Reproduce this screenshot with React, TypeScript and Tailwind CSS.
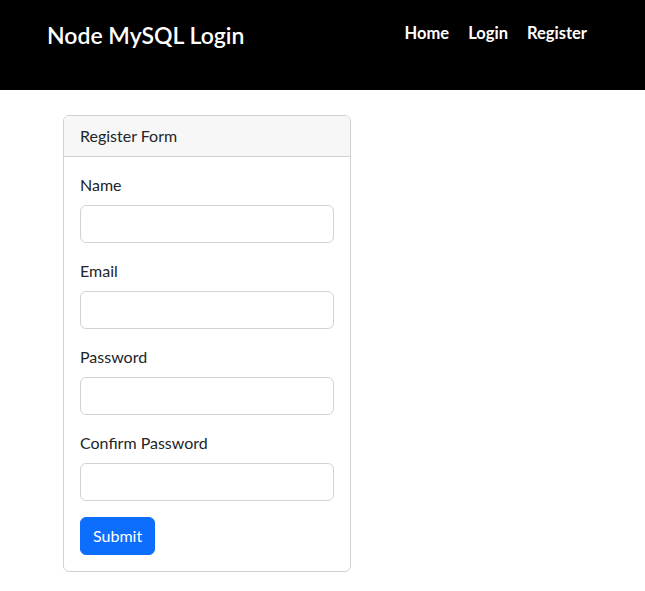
import React from "react";

const fields = ["Name", "Email", "Password", "Confirm Password"];

export default function App() {
  return (
    <div className="min-h-screen bg-white text-[#212529] font-['Lato',sans-serif]">
      {/* Navbar */}
      <nav className="h-[90px] bg-black flex items-start pt-[20px] pl-[47px] pr-[58px]">
        <a className="text-white text-[23px] leading-[30px] font-semibold">Node MySQL Login</a>
        <div className="ml-auto flex gap-[19px]">
          {["Home", "Login", "Register"].map((l) => (
            <a key={l} className="text-white text-[16.5px] leading-[26px] font-bold">
              {l}
            </a>
          ))}
        </div>
      </nav>

      {/* Card */}
      <div className="ml-[63px] mt-[25px] w-[288px] border border-[#d2d2d2] rounded-[6px] overflow-hidden">
        <div className="bg-[#f7f7f7] border-b border-[#d2d2d2] px-4 py-2 text-[16px] leading-6">
          Register Form
        </div>
        <form className="p-4">
          {fields.map((f) => (
            <div key={f} className="mb-4">
              <label className="block mb-2 text-[16px] leading-6">{f}</label>
              <input
                type={f.includes("Password") ? "password" : f === "Email" ? "email" : "text"}
                className="block w-full h-[38px] border border-[#ced4da] rounded-[6px] px-3 outline-none"
              />
            </div>
          ))}
          <button
            type="button"
            className="bg-[#0d6efd] text-white text-[16px] leading-6 px-3 py-[6px] rounded-[6px] border border-[#0d6efd]"
          >
            Submit
          </button>
        </form>
      </div>
    </div>
  );
}
